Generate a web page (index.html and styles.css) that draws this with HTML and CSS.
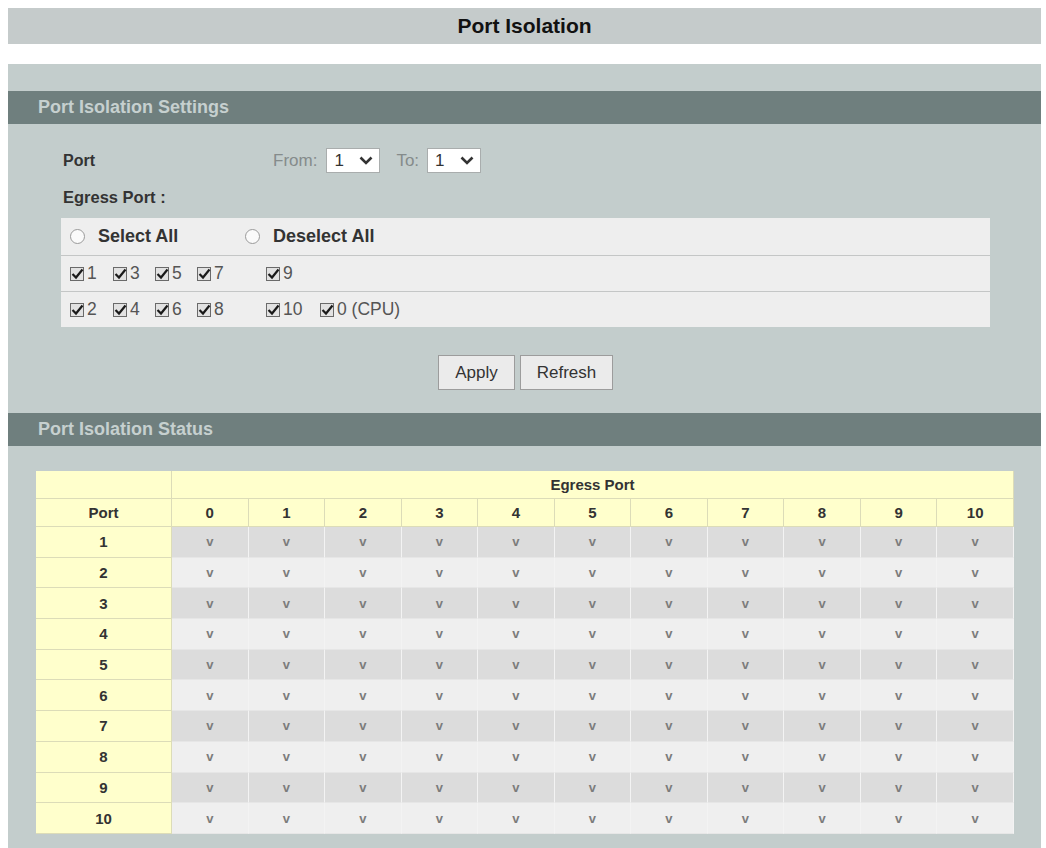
FILE: index.html
```html
<!DOCTYPE html>
<html>
<head>
<meta charset="utf-8">
<title>Port Isolation</title>
<link rel="stylesheet" href="styles.css">
</head>
<body>
<div class="title">Port Isolation</div>
<div class="panel">
  <div class="sec-head">Port Isolation Settings</div>
  <div class="settings">
    <div class="port-row">
      <span class="lbl port-lbl">Port</span>
      <span class="from">From:</span>
      <span class="sel">1<svg class="chev" viewBox="0 0 14 9" width="14" height="9"><path d="M1.5 1.5 L7 7 L12.5 1.5" fill="none" stroke="#333" stroke-width="2.6"/></svg></span>
      <span class="to">To:</span>
      <span class="sel">1<svg class="chev" viewBox="0 0 14 9" width="14" height="9"><path d="M1.5 1.5 L7 7 L12.5 1.5" fill="none" stroke="#333" stroke-width="2.6"/></svg></span>
    </div>
    <div class="lbl egress-lbl">Egress Port :</div>
    <div class="egress">
      <div class="eg-row radios">
        <span class="radio-item"><span class="radio"></span>Select All</span>
        <span class="radio-item"><span class="radio"></span>Deselect All</span>
      </div>
      <div class="eg-row cbs">
        <span class="cb"><svg viewBox="0 0 14 14" width="14" height="14"><rect x="0.5" y="0.5" width="13" height="13" fill="#e2e2e2" stroke="#6a6a6a"/><path d="M2.5 7 L6 10.5 L12.5 2.5" fill="none" stroke="#1a1a1a" stroke-width="2.2"/></svg>1</span>
        <span class="cb"><svg viewBox="0 0 14 14" width="14" height="14"><rect x="0.5" y="0.5" width="13" height="13" fill="#e2e2e2" stroke="#6a6a6a"/><path d="M2.5 7 L6 10.5 L12.5 2.5" fill="none" stroke="#1a1a1a" stroke-width="2.2"/></svg>3</span>
        <span class="cb"><svg viewBox="0 0 14 14" width="14" height="14"><rect x="0.5" y="0.5" width="13" height="13" fill="#e2e2e2" stroke="#6a6a6a"/><path d="M2.5 7 L6 10.5 L12.5 2.5" fill="none" stroke="#1a1a1a" stroke-width="2.2"/></svg>5</span>
        <span class="cb"><svg viewBox="0 0 14 14" width="14" height="14"><rect x="0.5" y="0.5" width="13" height="13" fill="#e2e2e2" stroke="#6a6a6a"/><path d="M2.5 7 L6 10.5 L12.5 2.5" fill="none" stroke="#1a1a1a" stroke-width="2.2"/></svg>7</span>
        <span class="cb"><svg viewBox="0 0 14 14" width="14" height="14"><rect x="0.5" y="0.5" width="13" height="13" fill="#e2e2e2" stroke="#6a6a6a"/><path d="M2.5 7 L6 10.5 L12.5 2.5" fill="none" stroke="#1a1a1a" stroke-width="2.2"/></svg>9</span>
      </div>
      <div class="eg-row cbs">
        <span class="cb"><svg viewBox="0 0 14 14" width="14" height="14"><rect x="0.5" y="0.5" width="13" height="13" fill="#e2e2e2" stroke="#6a6a6a"/><path d="M2.5 7 L6 10.5 L12.5 2.5" fill="none" stroke="#1a1a1a" stroke-width="2.2"/></svg>2</span>
        <span class="cb"><svg viewBox="0 0 14 14" width="14" height="14"><rect x="0.5" y="0.5" width="13" height="13" fill="#e2e2e2" stroke="#6a6a6a"/><path d="M2.5 7 L6 10.5 L12.5 2.5" fill="none" stroke="#1a1a1a" stroke-width="2.2"/></svg>4</span>
        <span class="cb"><svg viewBox="0 0 14 14" width="14" height="14"><rect x="0.5" y="0.5" width="13" height="13" fill="#e2e2e2" stroke="#6a6a6a"/><path d="M2.5 7 L6 10.5 L12.5 2.5" fill="none" stroke="#1a1a1a" stroke-width="2.2"/></svg>6</span>
        <span class="cb"><svg viewBox="0 0 14 14" width="14" height="14"><rect x="0.5" y="0.5" width="13" height="13" fill="#e2e2e2" stroke="#6a6a6a"/><path d="M2.5 7 L6 10.5 L12.5 2.5" fill="none" stroke="#1a1a1a" stroke-width="2.2"/></svg>8</span>
        <span class="cb"><svg viewBox="0 0 14 14" width="14" height="14"><rect x="0.5" y="0.5" width="13" height="13" fill="#e2e2e2" stroke="#6a6a6a"/><path d="M2.5 7 L6 10.5 L12.5 2.5" fill="none" stroke="#1a1a1a" stroke-width="2.2"/></svg>10</span>
        <span class="cb"><svg viewBox="0 0 14 14" width="14" height="14"><rect x="0.5" y="0.5" width="13" height="13" fill="#e2e2e2" stroke="#6a6a6a"/><path d="M2.5 7 L6 10.5 L12.5 2.5" fill="none" stroke="#1a1a1a" stroke-width="2.2"/></svg>0 (CPU)</span>
      </div>
    </div>
    <div class="buttons">
      <button class="btn btn-apply">Apply</button>
      <button class="btn btn-refresh">Refresh</button>
    </div>
  </div>
  <div class="sec-head">Port Isolation Status</div>
  <div class="status">
    <table class="grid">
      <colgroup><col class="c-port"><col span="11" class="c-eg"></colgroup>
      <thead>
        <tr class="h1"><th class="y"></th><th class="y" colspan="11">Egress Port</th></tr>
        <tr class="h2"><th class="y">Port</th><th class="y">0</th><th class="y">1</th><th class="y">2</th><th class="y">3</th><th class="y">4</th><th class="y">5</th><th class="y">6</th><th class="y">7</th><th class="y">8</th><th class="y">9</th><th class="y">10</th></tr>
      </thead>
      <tbody>
        <tr class="dark"><th class="y">1</th><td>v</td><td>v</td><td>v</td><td>v</td><td>v</td><td>v</td><td>v</td><td>v</td><td>v</td><td>v</td><td>v</td></tr>
        <tr class="light"><th class="y">2</th><td>v</td><td>v</td><td>v</td><td>v</td><td>v</td><td>v</td><td>v</td><td>v</td><td>v</td><td>v</td><td>v</td></tr>
        <tr class="dark"><th class="y">3</th><td>v</td><td>v</td><td>v</td><td>v</td><td>v</td><td>v</td><td>v</td><td>v</td><td>v</td><td>v</td><td>v</td></tr>
        <tr class="light"><th class="y">4</th><td>v</td><td>v</td><td>v</td><td>v</td><td>v</td><td>v</td><td>v</td><td>v</td><td>v</td><td>v</td><td>v</td></tr>
        <tr class="dark"><th class="y">5</th><td>v</td><td>v</td><td>v</td><td>v</td><td>v</td><td>v</td><td>v</td><td>v</td><td>v</td><td>v</td><td>v</td></tr>
        <tr class="light"><th class="y">6</th><td>v</td><td>v</td><td>v</td><td>v</td><td>v</td><td>v</td><td>v</td><td>v</td><td>v</td><td>v</td><td>v</td></tr>
        <tr class="dark"><th class="y">7</th><td>v</td><td>v</td><td>v</td><td>v</td><td>v</td><td>v</td><td>v</td><td>v</td><td>v</td><td>v</td><td>v</td></tr>
        <tr class="light"><th class="y">8</th><td>v</td><td>v</td><td>v</td><td>v</td><td>v</td><td>v</td><td>v</td><td>v</td><td>v</td><td>v</td><td>v</td></tr>
        <tr class="dark"><th class="y">9</th><td>v</td><td>v</td><td>v</td><td>v</td><td>v</td><td>v</td><td>v</td><td>v</td><td>v</td><td>v</td><td>v</td></tr>
        <tr class="light"><th class="y">10</th><td>v</td><td>v</td><td>v</td><td>v</td><td>v</td><td>v</td><td>v</td><td>v</td><td>v</td><td>v</td><td>v</td></tr>
      </tbody>
    </table>
  </div>
</div>
</body>
</html>
```

FILE: styles.css
```css
html, body {
  background: #ffffff;
}
body {
  margin: 8px 5px 0 8px;
  font-family: "Liberation Sans", Arial, sans-serif;
  color: #333;
}
.title {
  height: 36px;
  line-height: 36px;
  background: #c5cbcb;
  text-align: center;
  font-size: 21px;
  font-weight: bold;
  color: #111;
}
.panel {
  margin-top: 20px;
  background: #c3cdcc;
  padding-top: 27px;
  padding-bottom: 40px;
}
.sec-head {
  height: 33px;
  line-height: 33px;
  background: #6f7f7e;
  color: #c6d0cf;
  font-size: 18px;
  font-weight: bold;
  padding-left: 30px;
}
.settings {
  padding: 24px 51px 23px 53px;
}
.lbl {
  font-size: 16px;
  font-weight: bold;
  color: #333;
}
.port-row {
  display: flex;
  align-items: center;
  height: 25px;
  padding-left: 2px;
  font-size: 17px;
}
.port-lbl {
  width: 210px;
  font-size: 16px;
}
.from, .to {
  color: #858b8b;
}
.from {
  margin-right: 9px;
}
.to {
  margin-left: 16px;
  margin-right: 8px;
}
.sel {
  box-sizing: border-box;
  width: 54px;
  height: 25px;
  background: #fff;
  border: 1px solid #a9adad;
  display: flex;
  align-items: center;
  justify-content: space-between;
  padding: 0 6px 0 7px;
  color: #333;
  font-size: 17px;
}
.chev {
  display: block;
}
.egress-lbl {
  margin-top: 14px;
  line-height: 20px;
  padding-left: 2px;
  font-size: 16.5px;
}
.egress {
  margin-top: 11px;
  background: #eeeeee;
}
.eg-row {
  box-sizing: border-box;
  height: 36px;
  display: flex;
  align-items: center;
  padding-left: 9px;
}
.eg-row + .eg-row {
  border-top: 1px solid #c4c6c6;
}
.radios {
  height: 37px;
  font-size: 18px;
  font-weight: bold;
  color: #333;
}
.radio-item {
  display: inline-flex;
  align-items: center;
  width: 175px;
}
.radio {
  box-sizing: border-box;
  width: 15px;
  height: 15px;
  border-radius: 50%;
  border: 1px solid #9a9a9a;
  background: #fafafa;
  margin-right: 13px;
}
.cbs {
  display: grid;
  grid-template-columns: 43px 42px 42px 69px 54px auto;
  align-items: center;
  font-size: 17.5px;
  color: #555;
}
.cb {
  display: inline-flex;
  align-items: center;
  white-space: nowrap;
}
.cb svg {
  margin-right: 3px;
}
.buttons {
  margin-top: 28px;
  display: flex;
  justify-content: center;
  gap: 5px;
}
.btn {
  box-sizing: border-box;
  height: 35px;
  background: #ebebeb;
  border: 1px solid #9c9c9c;
  font-family: "Liberation Sans", Arial, sans-serif;
  font-size: 17px;
  color: #333;
  padding: 0;
}
.btn-apply {
  width: 77px;
}
.btn-refresh {
  width: 93px;
}
.status {
  padding: 25px 27px 0 28px;
}
.grid {
  width: 978px;
  border-collapse: separate;
  border-spacing: 0;
  table-layout: fixed;
  font-size: 15px;
}
.c-port {
  width: 136px;
}
.grid th, .grid td {
  padding: 0;
  text-align: center;
  box-sizing: border-box;
}
.grid th {
  font-weight: bold;
  color: #333;
}
.grid .y {
  background: #ffffcc;
  border-right: 1px solid #dcdcb8;
  border-bottom: 1px solid #dcdcb8;
}
.h1, .h2 {
  height: 28px;
}
tbody tr {
  height: 30.7px;
}
.grid td {
  color: #7c7c7c;
  font-weight: bold;
  font-size: 13px;
  border-right: 1px solid #f3f3f3;
  border-bottom: 1px solid #e6e6e6;
}
.dark td {
  background: #dcdcdc;
}
.light td {
  background: #efefef;
}
```
